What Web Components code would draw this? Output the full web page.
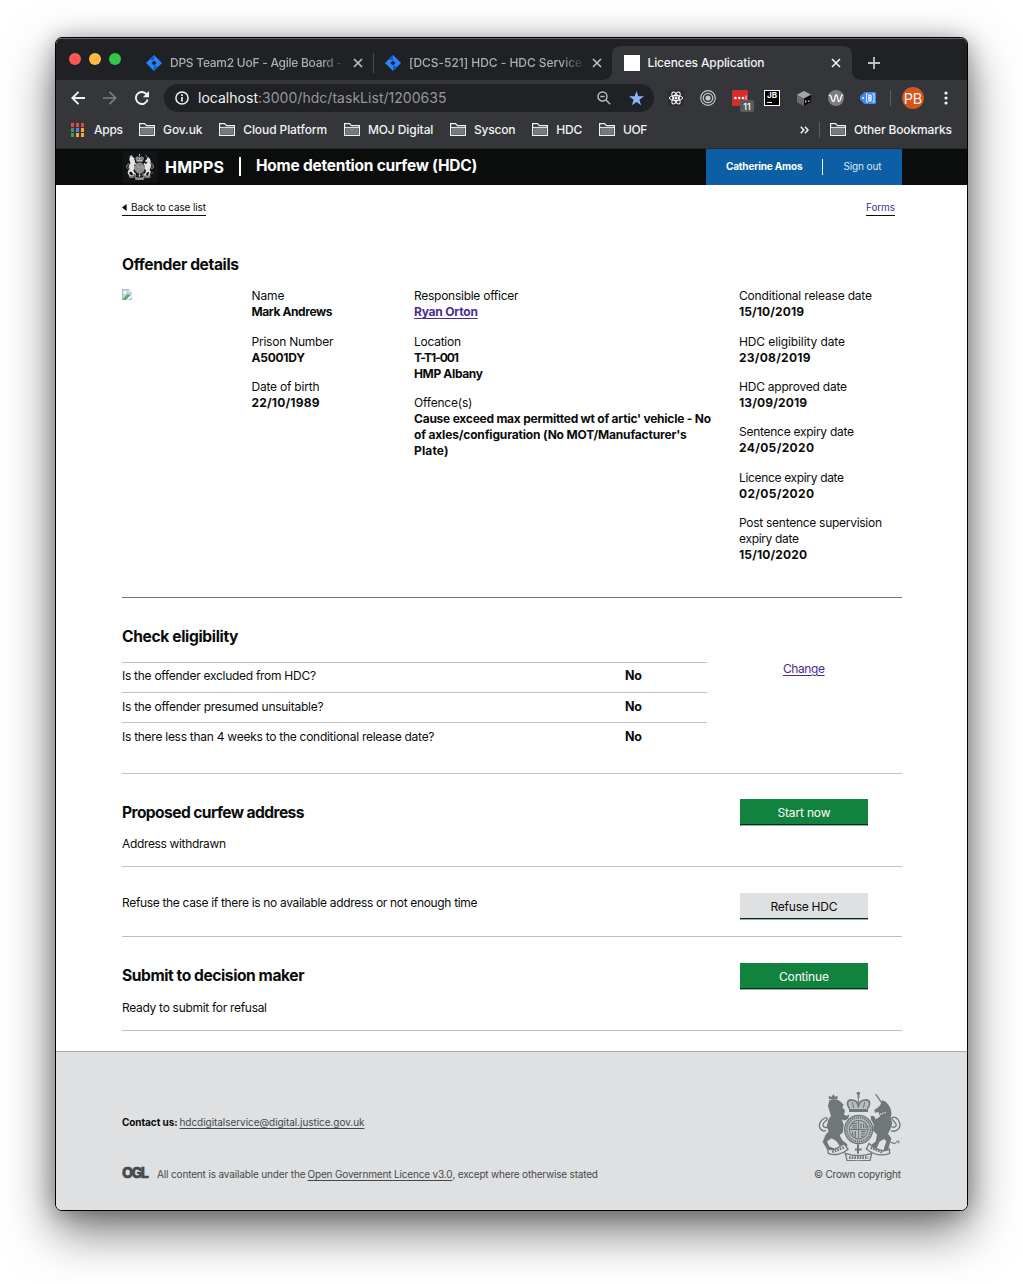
<!DOCTYPE html>
<html lang="en">
<head>
<meta charset="utf-8">
<title>Licences Application</title>
<style>
html{background:#fff}
body{margin:0;padding:37px 55px 73px;height:1174px;font-family:Inter,"Liberation Sans",sans-serif;color:#0b0c0c}
</style>
</head>
<body>
<mac-window>
  <tab-strip slot="chrome"></tab-strip>
  <tool-bar slot="chrome"></tool-bar>
  <bookmark-bar slot="chrome"></bookmark-bar>
  <service-header></service-header>
  <task-page></task-page>
  <site-footer></site-footer>
</mac-window>
<script>
const define = (name, html, setup) => {
  const tpl = document.createElement('template');
  customElements.define(name, class extends HTMLElement {
    connectedCallback() {
      if (this.shadowRoot) return;
      tpl.innerHTML = typeof html === 'function' ? html(this) : html;
      this.attachShadow({mode: 'open'}).appendChild(tpl.content.cloneNode(true));
      if (setup) setup(this);
    }
  });
};

/* Icons, each in its own view box */
const jira = '<path d="M8 0 16 8 8 16 0 8Z" fill="#2684ff"/><path d="M8 0 3.6 4.4 8 5.2Z M8 16 12.4 11.6 8 10.8Z" fill="#1459c7"/><path d="M8 5.4 10.6 8 8 10.6 5.4 8Z" fill="#202124"/>';
const ICONS = {
  jira: [16, 16, jira],
  close: [10, 10, '<path d="M1 1 9 9M9 1 1 9" stroke="currentColor" stroke-width="1.6"/>'],
  plus: [12, 12, '<path d="M6 0V12M0 6H12" stroke="currentColor" stroke-width="1.8"/>'],
  back: [14, 14, '<path d="M14 7H1.5M7.5 .8 1.3 7 7.5 13.2" fill="none" stroke="currentColor" stroke-width="1.9"/>'],
  forward: [14, 14, '<path d="M0 7H12.5M6.5 .8 12.7 7 6.5 13.2" fill="none" stroke="currentColor" stroke-width="1.7"/>'],
  reload: [14, 14, '<path d="M11.9 3.6A6 6 0 1 0 12.7 8.6" fill="none" stroke="currentColor" stroke-width="1.9"/><path d="M14 0V6.2H7.8Z" fill="currentColor"/>'],
  info: [14, 14, '<circle cx="7" cy="7" r="6.1" fill="none" stroke="currentColor" stroke-width="1.5"/><path d="M7 6V10.6M7 3.3V4.9" stroke="currentColor" stroke-width="1.7"/>'],
  zoom: [14, 14, '<circle cx="5.5" cy="5.5" r="4.5" fill="none" stroke="currentColor" stroke-width="1.5"/><path d="M8.8 8.8 13.2 13.2M3.3 5.5H7.7" stroke="currentColor" stroke-width="1.5"/>'],
  star: [15, 15, '<path d="M7.5 0 9.3 5.3H15L10.4 8.7 12.1 14.3 7.5 10.9 2.9 14.3 4.6 8.7 0 5.3H5.7Z" fill="#8ab4f8"/>'],
  react: [16, 16, '<rect width="16" height="16" rx="1" fill="#2b2c30"/><g fill="none" stroke="#fff" stroke-width="1"><ellipse cx="8" cy="8" rx="6.6" ry="2.6"/><ellipse cx="8" cy="8" rx="6.6" ry="2.6" transform="rotate(60 8 8)"/><ellipse cx="8" cy="8" rx="6.6" ry="2.6" transform="rotate(120 8 8)"/></g><circle cx="8" cy="8" r="1.4" fill="#fff"/>'],
  target: [16, 16, '<g fill="none" stroke="#c4c6c8"><circle cx="8" cy="8" r="7.3" stroke-width="1.2"/><circle cx="8" cy="8" r="4.7" stroke-width="1.3"/></g><circle cx="8" cy="8" r="2.6" fill="#c4c6c8"/>'],
  dots: [16, 16, '<rect width="16" height="16" rx="1.5" fill="#d32d2f"/><g fill="#fff"><circle cx="3.4" cy="8" r="1.3"/><circle cx="7.2" cy="8" r="1.3"/><circle cx="11" cy="8" r="1.3"/><path d="M13.6 5.5h.8v5h-.8z"/></g>'],
  cube: [14, 15, '<path d="M7 0 14 3.7V11.3L7 15 0 11.3V3.7Z" fill="#686a6c"/><path d="M7 0 14 3.7 7 7.5 0 3.7Z" fill="#a2a4a5"/><path d="M14 3.7V11.3L7 15V7.5Z" fill="#0b0b0b"/><path d="M8.8 9.4V11.6M11 10.5 12.6 9.7" stroke="#fff" stroke-width="1"/>'],
  wave: [16, 16, '<circle cx="8" cy="8" r="8" fill="#7d7e80"/><path d="M.8 5.3C3.8 3.8 3.3 11.6 5.2 11.6 7.2 11.6 6.4 5 8.2 5 10.1 5 9.3 11.6 11.2 11.6 12.8 11.6 12.3 5.6 14.8 4.6" fill="none" stroke="#fff" stroke-width="1.3"/>'],
  tag: [16, 12, '<path d="M4.5 0H15Q16 0 16 1V11Q16 12 15 12H4.5L0 7.8V4.2Z" fill="#4285f4"/><circle cx="3.2" cy="6" r="1" fill="#fff"/><path d="M6 2H8M6 10H8M6.5 2V10M14 2V10M12.3 2H14.4M12.3 10H14.4" stroke="#d6e5ff" stroke-width="1"/><path d="M8.2 2.5H11Q12.4 4 11.5 6 12.4 8 11 9.5H8.2Z" fill="#e6efff"/><path d="M9.5 4.4H10.4M9.5 7.4H10.4" stroke="#4285f4"/>'],
  menu: [4, 14, '<g fill="#f1f3f4"><circle cx="2" cy="2" r="1.6"/><circle cx="2" cy="7" r="1.6"/><circle cx="2" cy="12" r="1.6"/></g>'],
  apps: [13, 14, '<g fill="#e8453c"><path d="M0 0h3v4H0zM5 0h3v4H5zM10 0h3v4h-3z"/></g><path d="M0 5h3v4H0zM0 10h3v4H0z" fill="#3c9a5b"/><path d="M5 5h3v4H5z" fill="#4285f4"/><path d="M10 5h3v4h-3zM5 10h3v4H5zM10 10h3v4h-3z" fill="#f4a92c"/>'],
  folder: [16, 13, '<path d="M.6 12.4V.6H5.6L7.4 2.6H15.4V12.4Z" fill="none" stroke="#f1f3f4" stroke-width="1.2"/><path d="M1.8 5H14.2V11.2H1.8Z" fill="#77797c"/><path d="M1 4.4H15" stroke="#f1f3f4" stroke-width="1"/>'],
  more: [9, 8, '<path d="M.8 .8 3.8 4 .8 7.2M5 .8 8 4 5 7.2" fill="none" stroke="#f1f3f4" stroke-width="1.5"/>'],
  caret: [5, 7, '<path d="M4.6 0V7L0 3.5Z" fill="#0b0c0c"/>'],
  broken: [10, 11, '<path d="M0 0H7L10 3V11H0Z" fill="#c3d4f1"/><path d="M7 0V3H10Z" fill="#f2f2f2"/><circle cx="3" cy="3.4" r="1.3" fill="#fff"/><path d="M0 11 5.5 5.3 8.5 5.8 3.5 11Z" fill="#58ab47"/><path d="M4.2 11 10 5.5V7.3L6 11Z" fill="#fff"/><path d="M.3 0V11M0 .3H7M0 10.8H10" stroke="#999" stroke-width=".5"/>']
};
define('ui-icon', el => {
  const [w, h, body] = ICONS[el.getAttribute('name')];
  return `<style>:host{display:block;flex:none;width:${w}px;height:${h}px}svg{display:block}</style>
  <svg width="${w}" height="${h}" viewBox="0 0 ${w} ${h}">${body}</svg>`;
});

/* Royal arms: lion, crowned garter shield, unicorn and motto scroll */
define('royal-crest', `<style>:host{display:block;flex:none}svg{display:block;width:100%;height:100%}</style>
<svg viewBox="117 36 249 206" preserveAspectRatio="none" fill="currentColor">
  <circle cx="238" cy="40" r="5"/><path d="M236 42h5v12h-5z"/>
  <path d="M212 86C200 70 206 58 220 60 232 60 236 66 238 70 241 66 246 60 257 60 272 58 277 70 265 86Z" opacity=".35"/>
  <circle cx="239" cy="148" r="40" opacity=".35"/>
  <g fill="none" stroke="currentColor" stroke-width="5">
    <path d="M212 86C200 70 206 58 220 60 232 60 236 66 238 78 241 66 246 60 257 60 272 58 277 70 265 86"/>
    <path d="M224 84 220 66M253 84 257 66M238 52V84" stroke-width="3"/>
    <path d="M210 91H267" stroke-width="9"/>
    <circle cx="239" cy="148" r="42" stroke-width="4"/>
    <circle cx="239" cy="148" r="36" stroke-width="6" stroke-dasharray="4 2.4"/>
    <circle cx="239" cy="148" r="28" stroke-width="3"/>
    <path d="M239 122V176M212 148H266" stroke-width="3"/>
    <path d="M219 130 234 130M218 137 234 137M220 143H234M246 130V144M254 130V144M261 136V144M221 155V166M229 153V172M246 154H260M246 161H258M246 168H253" stroke-width="4"/>
    <path d="M237 192V220M228 208H248" stroke-width="6"/>
    <path d="M141 152C124 154 117 139 124 126 130 115 143 109 145 117M145 117C143 124 132 124 132 134 132 142 140 144 148 140" stroke-width="4"/>
    <path d="M336 152C354 157 366 143 362 128 358 114 345 108 338 113M338 113C338 121 352 126 352 135 350 143 342 142 335 139" stroke-width="4"/>
    <path d="M290 42 308 68" stroke-width="4"/>
    <path d="M322 190C332 174 340 196 350 188 358 178 362 182 359 190" stroke-width="3"/>
  </g>
  <path d="M149 57 150 47 157 51 163 43 168 50 176 47 175 58Z"/>
  <path d="M151 61C162 54 181 58 188 68L194 74 190 82 198 91 195 104 203 107 211 103 208 115 198 121 189 118 194 134 192 156 182 165 190 180 205 192 203 204 185 202 172 182 157 174 144 184 151 199 166 205 157 213 144 207 131 185 139 165 149 153 143 139 148 119 156 107 151 92 147 78Z"/>
  <path d="M304 75 309 61 319 64 325 70C334 80 341 96 335 113L340 130 334 147 327 161 337 174 331 195 327 209 314 211 316 200 322 184 316 176 302 184 294 202 277 208 275 196 290 184 294 163 282 151 284 132 276 119 275 108 285 108 290 117 303 109 299 96 288 98 286 89 296 83Z"/>
  <path d="M290 108 322 96" stroke="var(--gap)" stroke-width="4" stroke-dasharray="4 3"/>
  <path d="M146 205C164 213 178 203 195 190L207 207C192 221 166 228 148 219ZM270 190C290 208 312 218 331 206L332 219C307 229 281 221 262 206ZM199 219C224 228 253 228 278 219L273 240C248 242 226 242 204 240Z" fill="var(--gap)" stroke="currentColor" stroke-width="4"/>
  <path d="M160 215 196 201M275 202 312 217M210 232H268" stroke="currentColor" stroke-width="8" stroke-dasharray="5 3"/>
</svg>`);

/* ---------- browser frame ---------- */
define('mac-window', `<style>
:host{display:flex;flex-direction:column;box-sizing:border-box;width:913px;height:1174px;border:1px solid #000;border-radius:7px;background:#fff;box-shadow:0 20px 50px rgba(0,0,0,.55),0 2px 22px rgba(0,0,0,.28)}
.in{display:flex;flex-direction:column;height:1172px;border-radius:6px;overflow:hidden}
</style><div class="in"><slot name="chrome"></slot><slot></slot></div>`);

define('browser-tab', el => `<style>
:host{display:flex;align-items:center;height:34px;font-size:12px;color:#abadb0;flex:none}
.t{flex:none;position:relative;top:-.6px}
.fade{-webkit-mask-image:linear-gradient(90deg,#000 88%,rgba(0,0,0,.15) 100%);mask-image:linear-gradient(90deg,#000 88%,rgba(0,0,0,.15) 100%)}
ui-icon[name=close]{color:#bfc1c4}
:host([active]){color:#f1f3f4;background:#35363a;border-radius:8px 8px 0 0;box-sizing:border-box;width:240px;position:relative}
:host([active]) ui-icon[name=close]{color:#f1f3f4}
:host([active])::before,:host([active])::after{content:"";position:absolute;bottom:0;width:8px;height:8px}
:host([active])::before{left:-8px;background:radial-gradient(circle at 0 0,transparent 7.5px,#35363a 8px)}
:host([active])::after{right:-8px;background:radial-gradient(circle at 100% 0,transparent 7.5px,#35363a 8px)}
.fav{width:16px;height:16px;background:#fff;margin-left:12px}
</style>
${el.hasAttribute('active') ? '<div class="fav"></div>' : '<ui-icon name="jira"></ui-icon>'}
<fit-text class="t ${el.hasAttribute('active') ? '' : 'fade'}" w="${el.getAttribute('w')}" style="margin:0 ${el.getAttribute('gap')}px 0 8px"><slot></slot></fit-text>
<ui-icon name="close"></ui-icon>`);

define('tab-strip', `<style>
:host{display:flex;height:42px;box-sizing:border-box;background:#202124;border-top:1px solid #66676a;padding:7px 0 0 13px;align-items:center;flex:none;font-weight:450}
i{width:12px;height:12px;border-radius:50%;margin-right:8px;margin-top:-8px;flex:none}
.sep{width:1px;height:20px;background:#4a4c50;margin:0 11px 0 10px;flex:none}
</style>
<i style="background:#fc5753"></i><i style="background:#fdbc40"></i><i style="background:#33c748"></i>
<browser-tab w="172" gap="11" style="margin-left:17px">DPS Team2 UoF - Agile Board -</browser-tab>
<span class="sep"></span>
<browser-tab w="173" gap="9.5">[DCS-521] HDC - HDC Service</browser-tab>
<browser-tab active w="117" gap="66" style="margin-left:10px">Licences Application</browser-tab>
<ui-icon name="plus" style="color:#bfc1c4;margin-left:16px"></ui-icon>`);

define('ext-button', el => `<style>
:host{display:grid;place-items:center;width:16px;height:16px;flex:none;position:relative}
.jb{box-sizing:border-box;width:16px;height:16px;background:#000;border:1px solid #fff;color:#fff;font:700 8px/9px Inter,sans-serif;padding-left:2px}
.jb::after{content:"";display:block;width:5px;height:1px;background:#fff;margin-top:2px}
b{position:absolute;left:8px;top:10px;width:14px;height:12px;border-radius:2px;background:#5a5b5e;color:#fff;font:500 9px/13px Inter,sans-serif;text-align:center}
</style>${el.getAttribute('icon') === 'jb' ? '<div class="jb">JB</div>' : `<ui-icon name="${el.getAttribute('icon')}"></ui-icon>`}${el.hasAttribute('badge') ? `<b>${el.getAttribute('badge')}</b>` : ''}`);

define('tool-bar', `<style>
:host{display:flex;align-items:center;height:36px;background:#35363a;padding-left:15px;flex:none;color:#f1f3f4}
.omni{display:flex;align-items:center;box-sizing:border-box;width:490px;height:28px;border-radius:14px;background:#202124;margin:0 14px 0 15px;padding-left:11px;font-size:14px;flex:none}
.omni fit-text{margin-top:-1px}
.rest{color:#96989b}
.ext{display:flex;gap:16px}
.sep{width:1px;height:16px;background:#5c5e62;margin:0 11px 0 14px}
.me{width:22px;height:22px;border-radius:50%;background:#d4541b;display:grid;place-items:center;font-size:14.5px;margin-right:19.5px}
</style>
<ui-icon name="back"></ui-icon>
<ui-icon name="forward" style="margin-left:18px;color:#7c7e81"></ui-icon>
<ui-icon name="reload" style="margin-left:18px"></ui-icon>
<div class="omni"><ui-icon name="info"></ui-icon>
<fit-text w="60" style="margin-left:9px">localhost</fit-text><fit-text class="rest" w="188.5">:3000/hdc/taskList/1200635</fit-text>
<ui-icon name="zoom" style="margin-left:150px;color:#b6b8ba"></ui-icon><ui-icon name="star" style="margin-left:18px"></ui-icon></div>
<div class="ext"><ext-button icon="react"></ext-button><ext-button icon="target"></ext-button><ext-button icon="dots" badge="11"></ext-button><ext-button icon="jb"></ext-button><ext-button icon="cube"></ext-button><ext-button icon="wave"></ext-button><ext-button icon="tag"></ext-button></div>
<span class="sep"></span><div class="me"><fit-text w="18.5">PB</fit-text></div><ui-icon name="menu"></ui-icon>`);

define('book-mark', el => `<style>:host{display:flex;align-items:center;flex:none}fit-text{margin-left:8px}</style>
<ui-icon name="folder"></ui-icon><fit-text w="${el.getAttribute('w')}"><slot></slot></fit-text>`);

define('bookmark-bar', `<style>
:host{display:flex;align-items:center;box-sizing:border-box;height:33px;background:#35363a;border-bottom:1px solid #27282b;padding:0 0 5px 15px;font-size:12px;font-weight:500;color:#f1f3f4;flex:none}
.row{display:flex;gap:16.7px;margin-left:16px}
.sep{width:1px;height:16px;background:#5c5e62;margin:0 10px}
</style>
<ui-icon name="apps"></ui-icon><fit-text w="29" style="margin-left:10px">Apps</fit-text>
<div class="row"><book-mark w="39.5">Gov.uk</book-mark><book-mark w="84">Cloud Platform</book-mark><book-mark w="65.5">MOJ Digital</book-mark><book-mark w="41.5">Syscon</book-mark><book-mark w="26">HDC</book-mark><book-mark w="24.5">UOF</book-mark></div>
<ui-icon name="more" style="margin-left:152.5px"></ui-icon><span class="sep"></span><book-mark w="98">Other Bookmarks</book-mark>`);

/* ---------- service page ---------- */
define('service-header', `<style>
:host{display:flex;align-items:center;height:36px;background:#0b0c0c;color:#fff;padding:0 65px 0 66px;font-size:16px;font-weight:700;flex:none}
.crest{box-sizing:border-box;width:36px;height:32px;background:#111315;padding:3px 4px 4px;margin-right:7px}
royal-crest{width:28px;height:26px;color:#e4e4e4;--gap:#44474a}
.bar{width:2px;height:19px;background:#fff;margin:-2px 15px 0}
.title{margin-top:-4px;font-size:15.5px}
.user{display:flex;align-items:center;width:196px;box-sizing:border-box;height:36px;background:#0c5fa4;margin-left:229px;padding-left:20px;font-size:10px}
.user fit-text{margin-top:-2px}
.user span{width:1px;height:16px;background:#fff;margin:0 20.5px 0 19.5px}
.out{font-weight:400;color:#dce9f4}
</style>
<div class="crest"><royal-crest></royal-crest></div><fit-text w="59">HMPPS</fit-text><div class="bar"></div>
<fit-text class="title" w="221">Home detention curfew (HDC)</fit-text>
<div class="user"><fit-text w="76.5">Catherine Amos</fit-text><span></span><fit-text class="out" w="38">Sign out</fit-text></div>`);

/* One term with bold values beneath; values are "text|width" split by ";" */
define('detail-item', el => {
  const [t, ...v] = el.getAttribute('lines').split(';').map(s => s.split('|'));
  const terms = +(el.getAttribute('terms') || 1);
  const line = ([s, w], b) => `<fit-text class="${b ? 'b' : ''}" w="${w}">${s}</fit-text>`;
  return `<style>:host{display:flex;flex-direction:column;margin-bottom:13.33px;line-height:16px;font-size:12px}
  .b{font-weight:700}:host([link]) .b{color:#4c2c92;text-decoration:underline;text-underline-offset:2px}</style>
  ${line(t)}${v.map((x, i) => line(x, i >= terms - 1)).join('')}`;
});

define('answer-row', el => `<style>:host{display:flex;align-items:center;box-sizing:border-box;height:30px;width:585px;border-top:1px solid #bfc1c3;font-size:12px;padding-bottom:2px}
:host([first]){padding-bottom:4px}
.q{width:503px}b{font-weight:700;font-size:12.5px}</style><div class="q"><fit-text w="${el.getAttribute('w')}"><slot></slot></fit-text></div><b><fit-text w="17">No</fit-text></b>`);

define('gov-button', el => `<style>:host{display:flex;justify-content:center;align-items:center;box-sizing:border-box;width:128px;height:26px;background:#12823f;border-bottom:1px solid #052c16;color:#fff;font-size:12px;padding-top:2px;box-shadow:0 1px 0 #8fb3a0}
:host([grey]){background:#dee0e2;color:#0b0c0c}</style><fit-text w="${el.getAttribute('w')}"><slot></slot></fit-text>`);

define('task-section', `<style>:host{display:flex;box-sizing:border-box;border-bottom:1px solid #bfc1c3;font-size:12px}
.l{width:618px}.r{width:128px}</style><div class="l"><slot></slot></div><div class="r"><slot name="action"></slot></div>`);

define('task-page', `<style>
:host{display:block;box-sizing:border-box;height:866px;background:#fff;padding:0 65px 0 66px;flex:none}
.nav{display:flex;justify-content:space-between;padding:15px 7px 0 0;font-size:10px;line-height:14px}
.nav a{display:flex;align-items:center;height:15px;border-bottom:1px solid #0b0c0c}
.nav a>*{margin-top:-1px}
.h{display:block;box-sizing:border-box;height:20px;padding-top:1px;font-size:15.6px;line-height:20px;font-weight:700}
.facts{display:flex;height:310px;box-sizing:border-box;border-bottom:1px solid #6f777b;margin-top:14px;padding-top:.4px}
.lk{color:#4c2c92;text-decoration:underline;text-underline-offset:2px}
</style>
<div class="nav"><a><ui-icon name="caret" style="margin-right:4px"></ui-icon><fit-text w="75">Back to case list</fit-text></a><a style="color:#4c2c92"><fit-text w="29">Forms</fit-text></a></div>
<div style="padding-top:38px"><fit-text class="h" w="117">Offender details</fit-text></div>
<div class="facts">
 <div style="width:129.5px;padding-top:1px"><ui-icon name="broken"></ui-icon></div>
 <div style="width:162.5px">
  <detail-item lines="Name|33;Mark Andrews|81"></detail-item>
  <detail-item lines="Prison Number|82;A5001DY|53.5"></detail-item>
  <detail-item lines="Date of birth|68;22/10/1989|68"></detail-item>
 </div>
 <div style="width:325px">
  <detail-item link lines="Responsible officer|104.5;Ryan Orton|64"></detail-item>
  <detail-item lines="Location|47;T-T1-001|45;HMP Albany|69"></detail-item>
  <detail-item lines="Offence(s)|58.5;Cause exceed max permitted wt of artic' vehicle - No|297;of axles/configuration (No MOT/Manufacturer's|272.5;Plate)|34.5"></detail-item>
 </div>
 <div>
  <detail-item lines="Conditional release date|133;15/10/2019|65"></detail-item>
  <detail-item lines="HDC eligibility date|106;23/08/2019|71.5"></detail-item>
  <detail-item lines="HDC approved date|108;13/09/2019|68"></detail-item>
  <detail-item lines="Sentence expiry date|115;24/05/2020|75"></detail-item>
  <detail-item lines="Licence expiry date|105;02/05/2020|75"></detail-item>
  <detail-item terms="2" lines="Post sentence supervision|143;expiry date|60;15/10/2020|68"></detail-item>
 </div>
</div>
<task-section style="height:176px">
  <fit-text class="h" w="116.5" style="margin:28px 0 16px">Check eligibility</fit-text>
  <answer-row first w="194">Is the offender excluded from HDC?</answer-row>
  <answer-row w="201.5">Is the offender presumed unsuitable?</answer-row>
  <answer-row w="312.5">Is there less than 4 weeks to the conditional release date?</answer-row>
  <div slot="action" style="display:flex;justify-content:center;padding-top:63px;line-height:16px"><fit-text class="lk" w="42">Change</fit-text></div>
</task-section>
<task-section style="height:93px">
  <fit-text class="h" w="182.5" style="margin:28px 0 14px">Proposed curfew address</fit-text>
  <fit-text w="104" style="line-height:16px">Address withdrawn</fit-text>
  <gov-button slot="action" w="53" style="margin-top:25px">Start now</gov-button>
</task-section>
<task-section style="height:70px">
  <fit-text w="355.5" style="margin-top:28px;line-height:16px">Refuse the case if there is no available address or not enough time</fit-text>
  <gov-button grey slot="action" w="67" style="margin-top:26px">Refuse HDC</gov-button>
</task-section>
<task-section style="height:94px">
  <fit-text class="h" w="182.5" style="margin:28px 0 15px">Submit to decision maker</fit-text>
  <fit-text w="145" style="line-height:16px">Ready to submit for refusal</fit-text>
  <gov-button slot="action" w="50" style="margin-top:26px">Continue</gov-button>
</task-section>`);

define('site-footer', `<style>
:host{display:flex;justify-content:space-between;box-sizing:border-box;height:159px;background:#dee0e2;border-top:1px solid #a1acb2;padding:40px 66px 0 66px;font-size:10px;line-height:14px;color:#45494c;flex:none}
.c{display:flex;padding-top:23px}
.c b{color:#0b0c0c;margin-right:2px}
.o{display:flex;align-items:center;margin-top:38px}
.ogl{font-size:14.5px;font-weight:800;-webkit-text-stroke:.5px #45494c;margin:-3px 8px 0 0}
.r{display:flex;flex-direction:column;align-items:flex-end}
royal-crest{width:83px;height:69px;color:#6f777b;--gap:#dee0e2;margin-bottom:6px}
</style>
<div><div class="c"><b><fit-text w="55.5">Contact us:</fit-text></b><fit-text w="185" ul>hdcdigitalservice@digital.justice.gov.uk</fit-text></div>
<div class="o"><fit-text class="ogl" w="27">OGL</fit-text><fit-text w="148.5" style="margin-right:2px">All content is available under the</fit-text><fit-text w="145" ul>Open Government Licence v3.0</fit-text><fit-text w="145.5">, except where otherwise stated</fit-text></div></div>
<div class="r"><royal-crest></royal-crest><fit-text w="87">© Crown copyright</fit-text></div>`);

/* Single line of text tracked to an exact width; registered last so fonts and sizes are inherited */
define('fit-text', '<style>:host{display:block;flex:none;white-space:nowrap}:host([ul]){text-decoration:underline;text-underline-offset:1.5px}span{display:inline-block;text-decoration:inherit}</style><span><slot></slot></span>', el => {
  const w = +el.getAttribute('w'), span = el.shadowRoot.querySelector('span');
  const slot = span.querySelector('slot');
  const text = (el.textContent.trim() || slot.assignedNodes({flatten: true}).map(n => n.textContent).join('').trim());
  const natural = span.getBoundingClientRect().width;
  el.style.letterSpacing = ((w - natural) / Math.max(1, text.length - 1)).toFixed(3) + 'px';
  el.style.width = w + 'px';
});
</script>
</body>
</html>
